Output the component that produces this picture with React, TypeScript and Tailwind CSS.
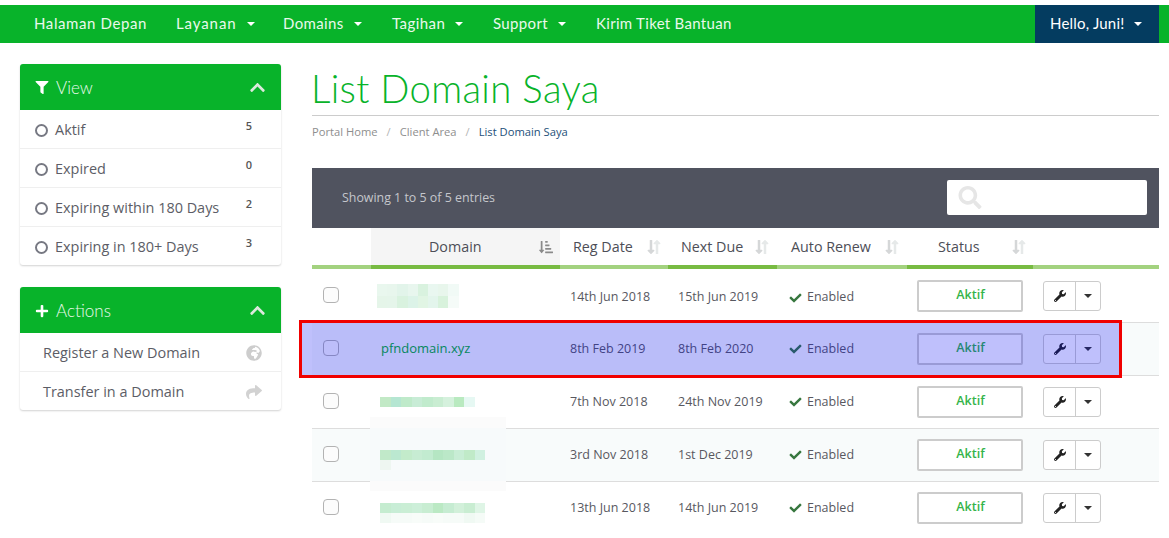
import {
  FaCheck,
  FaChevronUp,
  FaFilter,
  FaGlobeAfrica,
  FaLongArrowAltDown,
  FaLongArrowAltUp,
  FaPlus,
  FaSearch,
  FaShare,
  FaSortAmountDownAlt,
  FaWrench,
} from 'react-icons/fa';

const body = "font-['Open_Sans',sans-serif]";
const head = "font-['Lato',sans-serif]";

const navItems = [
  { label: 'Halaman Depan', caret: false, cls: 'w-[142px] tracking-[0.6px]' },
  { label: 'Layanan', caret: true, cls: 'w-[107px] tracking-[0.9px]' },
  { label: 'Domains', caret: true, cls: 'w-[109px] tracking-[0.35px]' },
  { label: 'Tagihan', caret: true, cls: 'w-[101px] tracking-[0.45px]' },
  { label: 'Support', caret: true, cls: 'w-[103px] tracking-[0.35px]' },
  { label: 'Kirim Tiket Bantuan', caret: false, cls: 'w-[170px] tracking-[0.3px]' },
];

const views = [
  { label: 'Aktif', n: 5 },
  { label: 'Expired', n: 0 },
  { label: 'Expiring within 180 Days', n: 2 },
  { label: 'Expiring in 180+ Days', n: 3 },
];

// blurred-out domain names, one array per pixel row
const mosaics: string[][][] = [
  [
    ['#e9f7ee', '#e8f6ed', '#e2f4ea', '#e8f6ee', '#d9f2df', '#e9f7f0', '#e8f6ec', '#f1faf6'],
    ['#e5f5e9', '#e5f5ea', '#d9f2df', '#dcf3e8', '#e1f5e4', '#e3f5ec', '#d8f2dc', '#f5fbf8'],
  ],
  [['#c2e9c6', '#b5e6d2', '#bfeaca', '#c8ecd6', '#c1ebcd', '#c9edd2', '#d5f1dd', '#b9eac0', '#e6f8f3']],
  [
    ['#c1e9c9', '#bbe8d0', '#c3ebcb', '#c7ecd3', '#c2ebd0', '#b5e6c3', '#bbe8c8', '#c8edd5', '#c0eac8', '#d0f0e0'],
    ['#eef6f1'],
  ],
  [
    ['#c5ecd0', '#c8edd6', '#caeed5', '#cdefd9', '#c8edd2', '#bbe9c4', '#c6ecd2', '#d2f0da', '#c9edd2', '#dff5e6'],
    ['#f0f9f3', '#f6fbf8', '#f6fbf8', '#f8fcf9', '#f6fbf8', '#f8fcf9', '#f6fbf8', '#f6fbf8', '#f0f9f3', '#f5fbf7'],
  ],
];

const rows = [
  { reg: '14th Jun 2018', due: '15th Jun 2019', mosaic: 0 },
  { reg: '8th Feb 2019', due: '8th Feb 2020', name: 'pfndomain.xyz', striped: true },
  { reg: '7th Nov 2018', due: '24th Nov 2019', mosaic: 1 },
  { reg: '3rd Nov 2018', due: '1st Dec 2019', mosaic: 2, striped: true },
  { reg: '13th Jun 2018', due: '14th Jun 2019', mosaic: 3 },
];

function Caret({ className = 'ml-[10px] border-t-white' }: { className?: string }) {
  return (
    <span className={`inline-block h-0 w-0 border-x-[4px] border-t-[4px] border-x-transparent ${className}`} />
  );
}

function Mosaic({ cells, tall }: { cells: string[][]; tall?: boolean }) {
  return (
    <div className={`relative z-10 flex flex-col ${tall ? 'h-[24px]' : 'h-[10px]'}`}>
      {cells.map((line, i) => (
        <div key={i} className={`flex shrink-0 ${tall ? 'h-[12px]' : 'h-[10px]'}`}>
          {line.map((c, j) => (
            <span key={j} className={`h-full ${tall ? 'w-[10.2px]' : 'w-[10.5px]'}`} style={{ background: c }} />
          ))}
        </div>
      ))}
    </div>
  );
}

function SortIcon() {
  return (
    <span className="flex items-center">
      <FaLongArrowAltDown className="-mr-[2px] h-[16px] w-[8px] text-[#d5d7d8]" />
      <FaLongArrowAltUp className="h-[16px] w-[8px] text-[#e6e9e9]" />
    </span>
  );
}

function Panel({
  icon,
  title,
  children,
}: {
  icon: React.ReactNode;
  title: string;
  children: React.ReactNode;
}) {
  return (
    <section className="overflow-hidden rounded-[3px] bg-white shadow-[0_1px_2px_rgba(0,0,0,0.18)]">
      <header className="flex h-[46px] items-center justify-between bg-[#08b32a] px-[15px] text-white">
        <h3 className={`flex items-center gap-[7px] pt-[1px] text-[17px] font-light text-[#e9f9ec] ${head}`}>
          {icon}
          {title}
        </h3>
        <FaChevronUp className="h-[17px] w-[17px] text-[#dbe9dc]" />
      </header>
      {children}
    </section>
  );
}

export default function App() {
  return (
    <div className={`relative h-[538px] w-[1169px] overflow-hidden bg-white pt-[5px] ${body}`}>
      <nav className={`flex h-[38px] items-stretch bg-[#08b32a] pl-[19px] pr-[10px] text-[15px] text-[#eaf9ec] ${head}`}>
        {navItems.map((item) => (
          <a key={item.label} className={`flex items-center px-[15px] pb-[1px] ${item.cls}`}>
            <span className="whitespace-nowrap">{item.label}</span>
            {item.caret && <Caret />}
          </a>
        ))}
        <a className="ml-auto flex w-[124px] items-center bg-[#043c60] pb-[1px] pl-[15px] tracking-[0.2px] text-white">
          Hello, Juni!
          <Caret />
        </a>
      </nav>

      <div className="flex items-start pl-[20px] pr-[10px]">
        <aside className="mt-[21px] flex w-[261px] flex-col gap-[22px]">
          <Panel icon={<FaFilter className="h-[13px] w-[14px] text-white" />} title="View">
            {views.map((v, i) => (
              <div
                key={v.label}
                className={`flex items-center pl-[15px] pr-[29px] pt-[2px] text-[14.45px] text-[#5c5d66] ${
                  i < views.length - 1 ? 'h-[39px] border-b border-[#efefef]' : 'h-[38px]'
                }`}
              >
                <span className="mr-[7px] h-[13px] w-[13px] rounded-full border-2 border-[#777983]" />
                <span className="flex-1">{v.label}</span>
                <span className="mb-[7px] text-[11px] font-semibold text-[#555]">{v.n}</span>
              </div>
            ))}
          </Panel>
          <Panel icon={<FaPlus className="h-[14px] w-[14px] text-white" />} title="Actions">
            <div className="flex h-[39px] items-center border-b border-[#efefef] pl-[23px] pr-[19px] pt-[2px] text-[14.45px] text-[#5c5d66]">
              <span className="flex-1">Register a New Domain</span>
              <FaGlobeAfrica className="h-[16px] w-[16px] text-[#cdcdcd]" />
            </div>
            <div className="flex h-[38px] items-center pl-[23px] pr-[18px] pt-[2px] text-[14.45px] text-[#5c5d66]">
              <span className="flex-1">Transfer in a Domain</span>
              <FaShare className="h-[16px] w-[18px] text-[#d2d2d2]" />
            </div>
          </Panel>
        </aside>

        <main className="ml-[31px] w-[847px]">
          <div className="h-[73px] border-b border-[#cccccc] pt-[22px]">
            <h1 className={`-ml-[1px] text-[38.4px] font-light leading-[46px] tracking-[0.3px] text-[#08b32a] ${head}`}>
              List Domain Saya
            </h1>
          </div>
          <ol className="mt-[9px] flex h-[14px] items-center text-[11.2px] text-[#8e8e8e]">
            <li>Portal Home</li>
            <li className="mx-[9px] text-[#b5b5b5]">/</li>
            <li>Client Area</li>
            <li className="mx-[9px] text-[#b5b5b5]">/</li>
            <li className="text-[#1d4f79]">List Domain Saya</li>
          </ol>

          <div className="mt-[29px] flex h-[60px] items-center justify-between bg-[#50535f] pl-[30px] pr-[12px]">
            <span className="pt-[1px] text-[12.4px] text-[#c5c7cc]">Showing 1 to 5 of 5 entries</span>
            <div className="mb-[1px] flex h-[35px] w-[200px] items-center rounded-[2px] bg-white pl-[11px]">
              <FaSearch className="h-[23px] w-[24px] text-[#e6e6e6]" />
            </div>
          </div>

          <table className="w-[847px] table-fixed border-separate border-spacing-0 text-[12.5px] text-[#58585f]">
            <colgroup>
              <col className="w-[59px]" />
              <col className="w-[189px]" />
              <col className="w-[108px]" />
              <col className="w-[109px]" />
              <col className="w-[130px]" />
              <col className="w-[126px]" />
              <col className="w-[126px]" />
            </colgroup>
            <thead>
              <tr className="h-[41px] text-[14.3px] text-[#4d4e57]">
                <th className="border-b-[4px] border-[#a3d27f]" />
                <th className="border-b-[4px] border-[#78bb42] bg-[#f5f5f5] pl-[58px] text-left font-normal">
                  <div className="flex items-center justify-between pr-[7px]">
                    Domain
                    <FaSortAmountDownAlt className="h-[14px] w-[14px] text-[#8a8a8a]" />
                  </div>
                </th>
                <th className="border-b-[4px] border-[#a3d27f] pl-[13px] text-left font-normal">
                  <div className="flex items-center gap-[14px]">
                    Reg Date
                    <SortIcon />
                  </div>
                </th>
                <th className="border-b-[4px] border-[#78bb42] pl-[13px] text-left font-normal">
                  <div className="flex items-center gap-[12px]">
                    Next Due
                    <SortIcon />
                  </div>
                </th>
                <th className="border-b-[4px] border-[#a3d27f] pl-[14px] text-left font-normal">
                  <div className="flex items-center gap-[14px]">
                    Auto Renew
                    <SortIcon />
                  </div>
                </th>
                <th className="border-b-[4px] border-[#78bb42] pl-[31px] text-left font-normal">
                  <div className="flex items-center gap-[32px]">
                    Status
                    <SortIcon />
                  </div>
                </th>
                <th className="border-b-[4px] border-[#a3d27f]" />
              </tr>
            </thead>
            <tbody>
              {rows.map((r, i) => {
                const line = i > 0 ? 'border-t border-[#dddddd]' : '';
                const nudge = i === 0 ? 'pt-[4px]' : '';
                return (
                  <tr key={r.reg} className={`h-[53px] ${r.striped ? 'bg-[#f8fbfb]' : ''}`}>
                    <td className={`pl-[11px] ${line}`}>
                      <span className="mb-[2px] block h-[16px] w-[16px] rounded-[4px] border border-[#b3b3b3] bg-[#fcfcfc]" />
                    </td>
                    <td className={`pl-[9px] ${line}`}>
                      {r.name ? (
                        <a className="ml-[1px] text-[13px] text-[#08b32a]">{r.name}</a>
                      ) : (
                        <div className={i === 0 ? '-ml-[3px]' : ''}>
                          <Mosaic cells={mosaics[r.mosaic ?? 0]} tall={i === 0} />
                        </div>
                      )}
                    </td>
                    <td className={`pl-[10px] ${nudge} ${line}`}>{r.reg}</td>
                    <td className={`pl-[10px] ${nudge} ${line}`}>{r.due}</td>
                    <td className={`pl-[12px] ${nudge} ${line}`}>
                      <span className="flex items-center gap-[5px]">
                        <FaCheck className="h-[12px] w-[13px] text-[#37773f]" />
                        Enabled
                      </span>
                    </td>
                    <td className={`pl-[10px] ${line}`}>
                      <span className="flex h-[32px] w-[106px] items-center justify-center rounded-[2px] border-2 border-[#cccccc] bg-white pb-[1px] pl-[1px] text-[12.5px] font-semibold text-[#35b44a]">
                        Aktif
                      </span>
                    </td>
                    <td className={`pl-[10px] ${line}`}>
                      <div className="flex h-[30px] w-[58px] rounded-[3px] border border-[#cccccc] bg-white">
                        <span className="flex w-[32px] items-center justify-center border-r border-[#cccccc]">
                          <FaWrench className="h-[12px] w-[12px] text-[#222]" />
                        </span>
                        <span className="flex flex-1 items-center justify-center">
                          <Caret className="border-t-[#333]" />
                        </span>
                      </div>
                    </td>
                  </tr>
                );
              })}
            </tbody>
          </table>
        </main>
      </div>

      {/* faint leftover of the blur, painted over the row lines */}
      <div className="absolute left-[370px] top-[417px] flex h-[74px] w-[136px] flex-col">
        <div className="h-[11px] bg-[#fbfbfb]" />
        <div className="flex-1 bg-[#f7fafb]" />
        <div className="h-[10px] bg-[#fbfbfb]" />
      </div>

      {/* marker drawn on the screenshot */}
      <div className="absolute left-[299px] top-[320px] h-[58px] w-[823px] border-[3px] border-[#f00000] bg-[#0005f5]/25" />
    </div>
  );
}
